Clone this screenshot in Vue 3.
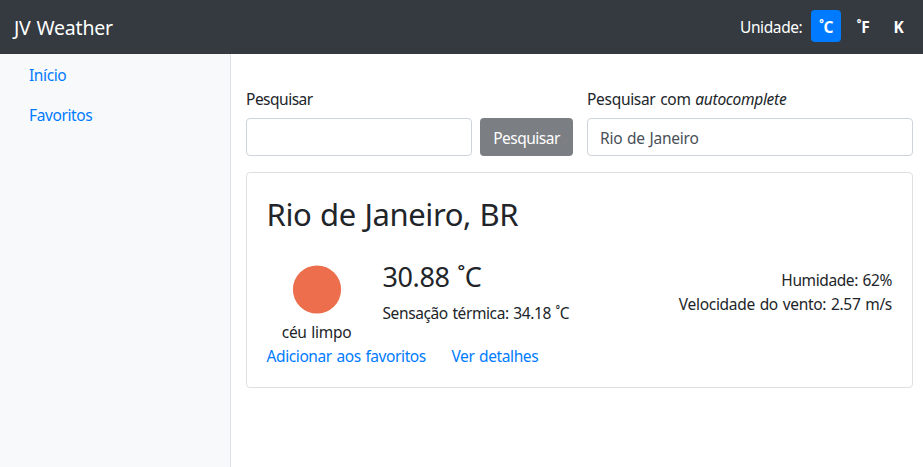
<script setup>
import { ref } from 'vue'

const units = ['˚C', '˚F', 'K']
const unit = ref('˚C')
const query = ref('')
const city = ref('Rio de Janeiro')
</script>

<template>
  <div class="app">
    <header class="navbar">
      <a class="brand" href="#">JV Weather</a>
      <div class="units">
        <span class="units-label">Unidade:</span>
        <button
          v-for="u in units"
          :key="u"
          class="unit"
          :class="{ active: u === unit }"
          @click="unit = u"
        >{{ u }}</button>
      </div>
    </header>
    <div class="body">
      <nav class="sidebar">
        <a class="home" href="#">Início</a>
        <a class="favs" href="#">Favoritos</a>
      </nav>
      <main class="content">
        <div class="forms">
          <form class="search" @submit.prevent>
            <label for="q">Pesquisar</label>
            <div class="row">
              <input id="q" v-model="query" class="control" type="text" />
              <button class="btn">Pesquisar</button>
            </div>
          </form>
          <div class="auto">
            <label for="a">Pesquisar com <em>autocomplete</em></label>
            <input id="a" v-model="city" class="control" type="text" />
          </div>
        </div>
        <section class="card">
          <h2>Rio de Janeiro, BR</h2>
          <div class="weather">
            <div class="sky">
              <svg class="sun" viewBox="0 0 50 50"><circle cx="25" cy="25" r="24.6" fill="#ec6e4c" /></svg>
              <span>céu limpo</span>
            </div>
            <div class="temp">
              <h3>30.88 ˚C</h3>
              <span>Sensação térmica: 34.18 ˚C</span>
            </div>
            <div class="extra">
              <span>Humidade: 62%</span>
              <span class="wind">Velocidade do vento: 2.57 m/s</span>
            </div>
          </div>
          <div class="links">
            <a class="add" href="#">Adicionar aos favoritos</a>
            <a class="details" href="#">Ver detalhes</a>
          </div>
        </section>
      </main>
    </div>
  </div>
</template>

<style>
body {
  margin: 0;
  overflow: hidden;
}
</style>

<style scoped>
.app,
.app * {
  box-sizing: border-box;
}
.app {
  height: 100vh;
  display: flex;
  flex-direction: column;
  background: #fff;
  color: #212529;
  font: 400 15.5px/24px "Noto Sans", "Open Sans", sans-serif;
  letter-spacing: -0.4px;
  word-spacing: 1px;
  white-space: nowrap;
}
a {
  color: #007bff;
  text-decoration: none;
}
button,
input {
  font: inherit;
  letter-spacing: inherit;
  word-spacing: inherit;
}
.navbar {
  height: 54px;
  flex: none;
  display: flex;
  align-items: center;
  justify-content: space-between;
  padding: 0 11px 2px 14px;
  background: #343a40;
  color: #fff;
}
.brand {
  color: #fff;
  font-size: 19.5px;
  line-height: 30px;
  letter-spacing: -0.2px;
  padding-top: 3px;
}
.units {
  display: flex;
  align-items: center;
}
.units-label {
  width: 71px;
  padding-top: 2px;
}
.unit {
  height: 32px;
  width: 30px;
  margin-right: 7px;
  padding: 2px 0 0;
  border: 0;
  border-radius: 4px;
  background: transparent;
  color: #fff;
  font-weight: 700;
  text-align: center;
}
.unit:last-child {
  width: 27px;
  margin-right: 0;
}
.unit.active {
  background: #007bff;
}
.body {
  flex: 1;
  display: flex;
  min-height: 0;
}
.sidebar {
  width: 231px;
  flex: none;
  display: flex;
  flex-direction: column;
  gap: 16px;
  padding: 9px 29px;
  background: #f8f9fa;
  border-right: 1px solid #dee2e6;
}
.content {
  flex: 1;
  min-width: 0;
  padding: 33px 10px 0 15px;
}
.forms {
  display: flex;
  gap: 14px;
}
.search {
  width: 327px;
}
.auto {
  flex: 1;
}
label {
  display: block;
  height: 31px;
  letter-spacing: -0.5px;
}
.auto label {
  letter-spacing: -0.3px;
}
.row {
  display: flex;
  gap: 8px;
}
.control {
  display: block;
  width: 100%;
  min-width: 0;
  height: 38px;
  padding: 1px 12px 0;
  border: 1px solid #ced4da;
  border-radius: 4px;
  background: #fff;
  color: #495057;
  letter-spacing: -0.25px;
  outline: 0;
}
.btn {
  width: 93px;
  flex: none;
  padding: 2px 0 0;
  border: 0;
  border-radius: 4px;
  background: #7b7e82;
  color: #fff;
  letter-spacing: -0.5px;
}
.card {
  height: 216px;
  margin-top: 16px;
  padding: 20px 20px 20px 19.5px;
  border: 1px solid #dfdfdf;
  border-radius: 4px;
}
h2 {
  margin: 2px 0 0;
  font-size: 31px;
  font-weight: 400;
  line-height: 38px;
}
.weather {
  display: flex;
  height: 90px;
  margin-top: 21px;
}
.sky {
  width: 100px;
  margin-top: 11px;
  display: flex;
  flex-direction: column;
  align-items: center;
  letter-spacing: -0.3px;
}
.sun {
  width: 50px;
  height: 50px;
  margin: 0 0 6px 1px;
}
.temp {
  flex: 1;
  padding: 6px 0 0 16px;
}
h3 {
  margin: 0 0 7px;
  font-size: 27px;
  font-weight: 400;
  line-height: 34px;
}
.extra {
  display: flex;
  flex-direction: column;
  align-items: flex-end;
  padding-top: 14px;
}
.wind {
  letter-spacing: -0.3px;
}
.links {
  display: flex;
}
.add {
  width: 185px;
}
</style>
